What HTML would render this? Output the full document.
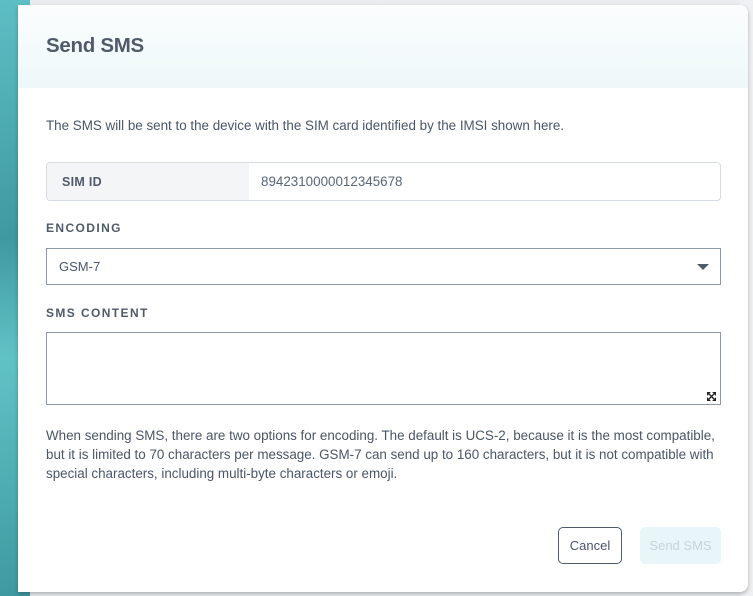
<!DOCTYPE html>
<html><head><meta charset="utf-8"><style>
*{box-sizing:border-box;margin:0;padding:0}
body{width:753px;height:596px;overflow:hidden;background:#e9ecef;font-family:"Liberation Sans",sans-serif;color:#4a5566;position:relative}
.bg{position:absolute;left:0;top:0;width:30px;height:596px;background:linear-gradient(180deg,#5bbfc4 0%,#3f99a0 40%,#5fc3c6 60%,#3e9aa0 100%)}
.rbg{position:absolute;left:740px;top:0;width:13px;height:596px;background:#eef0f2}
.modal{position:absolute;left:18px;top:5px;width:730px;height:587px;background:#fff;border-radius:0 8px 8px 0;box-shadow:0 2px 4px rgba(0,0,0,.25);overflow:hidden}
.hdr{height:83px;background:linear-gradient(180deg,#fbfdfe,#eef8f9);padding:29px 0 0 28px;font-size:20.5px;font-weight:bold;color:#4f5a6b;letter-spacing:-0.3px}
.p{position:absolute;left:28px;font-size:13.4px;color:#4a5566;white-space:nowrap}
.lbl{position:absolute;left:28px;font-size:12px;font-weight:bold;letter-spacing:1.4px;color:#4f5a6b}
.box{position:absolute;left:28px;width:675px;border:1px solid #8a97a8;background:#fff}
</style></head><body>
<div class="bg"></div><div class="rbg"></div>
<div class="modal">
<div class="hdr">Send SMS</div>
<div class="p" style="top:113px">The SMS will be sent to the device with the SIM card identified by the IMSI shown here.</div>
<div style="position:absolute;left:28px;top:157px;width:675px;height:39px;border:1px solid #d7dce2;border-radius:4px;overflow:hidden;display:flex">
<div style="width:202px;background:#f4f5f7;font-size:12.5px;font-weight:bold;color:#4f5a6b;padding:12px 0 0 15px;letter-spacing:.3px">SIM ID</div>
<div style="font-size:13.4px;padding:11px 0 0 12px;color:#5a6575">8942310000012345678</div></div>
<div class="lbl" style="top:216px">ENCODING</div>
<div class="box" style="top:243px;height:37px;padding:10px 0 0 12px;font-size:13px">GSM-7
<div style="position:absolute;right:11px;top:15px;width:0;height:0;border-left:6px solid transparent;border-right:6px solid transparent;border-top:6px solid #4f5a6b"></div></div>
<div class="lbl" style="top:301px">SMS CONTENT</div>
<div class="box" style="top:327px;height:73px"><svg style="position:absolute;right:4px;bottom:3px" width="9" height="9" viewBox="0 0 9 9"><path d="M0 0h3L0 3zM9 0v3L6 0zM0 9V6l3 3zM9 9H6l3-3zM1 1l7 7M8 1L1 8" stroke="#222" stroke-width="1.3" fill="#222"/></svg></div>
<div class="p" style="top:421px;line-height:19px">When sending SMS, there are two options for encoding. The default is UCS-2, because it is the most compatible,<br>but it is limited to 70 characters per message. GSM-7 can send up to 160 characters, but it is not compatible with<br>special characters, including multi-byte characters or emoji.</div>
<div style="position:absolute;left:540px;top:522px;width:64px;height:37px;border:1px solid #4f5a6b;border-radius:5px;font-size:13px;text-align:center;line-height:35px;color:#4a5566">Cancel</div>
<div style="position:absolute;left:622px;top:522px;width:81px;height:37px;background:#e8f6f9;border-radius:5px;font-size:13px;text-align:center;line-height:37px;color:#c8d3da">Send SMS</div>
</div>
</body></html>
